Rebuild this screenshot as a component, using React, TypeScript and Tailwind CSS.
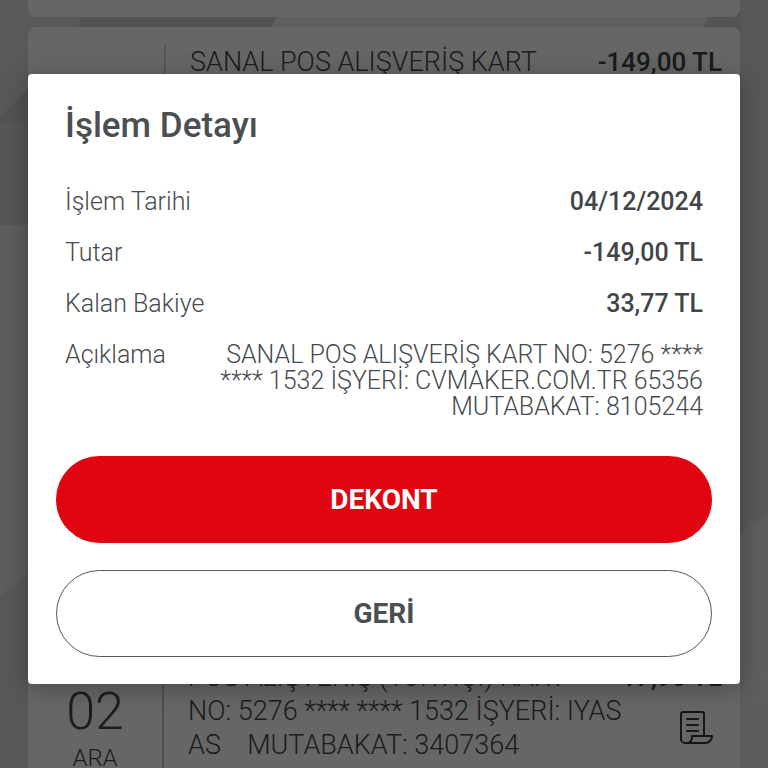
import type { ReactNode } from "react";

function Backdrop() {
  return (
    <svg
      className="absolute inset-0 h-full w-full"
      viewBox="0 0 768 768"
      preserveAspectRatio="none"
      aria-hidden="true"
    >
      <rect width="768" height="768" fill="#dcdfe1" />
      <polygon points="0,118 30,86 60,86 60,122 0,122" fill="#ced0d2" />
      <rect y="122" width="60" height="103" fill="#d4d7da" />
      <polygon points="0,225 60,225 60,550 0,596" fill="#e6e9e8" />
      <polygon points="0,596 60,550 60,768 0,768" fill="#dadde0" />
      <polygon points="700,0 768,0 768,150 700,200" fill="#d8dbde" />
      <polygon points="700,200 768,150 768,513 700,562" fill="#dddfe0" />
      <polygon points="700,562 768,513 768,704 700,704" fill="#e9ebea" />
      <rect x="700" y="704" width="68" height="64" fill="#e2e5ec" />
      <polygon points="84,10 280,10 268,34 76,34" fill="#cccecf" />
      <polygon points="280,10 712,10 700,34 268,34" fill="#ededed" />
      <polygon points="712,10 741,10 741,34 700,34" fill="#cfd1d2" />
    </svg>
  );
}

function ReceiptIcon() {
  return (
    <svg
      className="h-9 w-9"
      viewBox="0 0 36 36"
      fill="none"
      stroke="currentColor"
      strokeWidth="2"
      strokeLinecap="round"
      strokeLinejoin="round"
      aria-hidden="true"
    >
      <path d="M26 26V4a2 2 0 0 0-2-2H5a2 2 0 0 0-2 2v25a4 4 0 0 0 4 4h20c4 0 7-3 7-7H14c0 3-1 7-5 7" />
      <path d="M9 9h11M9 15h11M9 21h11" />
    </svg>
  );
}

function Amount({ children }: { children: ReactNode }) {
  return <span className="text-[26px] leading-[34px] font-medium text-[#3f4548]">{children}</span>;
}

function DetailRow({ label, children, strong }: { label: string; children: ReactNode; strong?: boolean }) {
  return (
    <div className="flex justify-between gap-10">
      <dt className="shrink-0">{label}</dt>
      <dd className={strong ? "text-right font-medium text-[#3f4548]" : "text-right"}>{children}</dd>
    </div>
  );
}

export default function App() {
  return (
    <div className="relative h-screen overflow-hidden font-['Roboto','Liberation_Sans',sans-serif] text-[#454b4f]">
      <Backdrop />
      <main className="relative flex h-full flex-col px-7">
        <div className="mb-[10px] h-[17px] shrink-0 rounded-b-lg bg-white" />
        <section className="flex flex-1 rounded-t-lg bg-white pt-[18px]">
          <div className="w-[138px] shrink-0 border-r-2 border-[#d4d6d8]" />
          <p className="min-w-0 flex-1 pl-6 text-[27px] leading-[34px] font-[350]">SANAL POS ALIŞVERİŞ KART</p>
          <div className="pr-[18px]">
            <Amount>-149,00 TL</Amount>
          </div>
        </section>
        <section className="flex h-[108px] shrink-0 bg-white">
          <div className="flex w-[136px] shrink-0 flex-col items-center gap-2 border-r-2 border-[#c4c8cc] pt-6">
            <span className="text-[52px] leading-[56px] font-[350]">02</span>
            <span className="text-2xl leading-5 font-[350]">ARA</span>
          </div>
          <p className="min-w-0 flex-1 pl-6 text-[27px] leading-[34px] font-[350] whitespace-pre">
            {"POS ALIŞVERİŞ (YURTİÇİ) KART\nNO: 5276 **** **** 1532 İŞYERİ: IYAS\nAS    MUTABAKAT: 3407364"}
          </p>
          <div className="flex flex-col items-end gap-4 pr-[18px]">
            <Amount>-17,90 TL</Amount>
            <button type="button" aria-label="Dekont" className="mr-2 text-[#33373a]">
              <ReceiptIcon />
            </button>
          </div>
        </section>
      </main>

      <div className="absolute inset-0 flex flex-col bg-black/60 px-7 pt-[74px]">
        <div
          role="dialog"
          aria-modal="true"
          aria-labelledby="dialog-title"
          className="rounded-[4px] bg-white px-7 pb-[27px] shadow-[0_4px_24px_rgba(0,0,0,0.3)]"
        >
          <div className="px-[9px] pt-[30px] pb-9">
            <h1 id="dialog-title" className="text-[35px] leading-[44px] font-medium text-[#4a4f52]">
              İşlem Detayı
            </h1>
            <dl className="mt-[41px] flex flex-col gap-[25px] text-[25px] leading-[26px] font-[350]">
              <DetailRow label="İşlem Tarihi" strong>04/12/2024</DetailRow>
              <DetailRow label="Tutar" strong>-149,00 TL</DetailRow>
              <DetailRow label="Kalan Bakiye" strong>33,77 TL</DetailRow>
              <DetailRow label="Açıklama">
                SANAL POS ALIŞVERİŞ KART NO: 5276 ****
                <br />
                **** 1532 İŞYERİ: CVMAKER.COM.TR 65356
                <br />
                MUTABAKAT: 8105244
              </DetailRow>
            </dl>
          </div>
          <div className="flex flex-col gap-[27px]">
            <button type="button" className="h-[87px] rounded-full bg-[#e10411] text-[28px] font-bold text-white">
              DEKONT
            </button>
            <button
              type="button"
              className="h-[87px] rounded-full border border-[#54595c] bg-white text-[28px] font-bold text-[#4a4f52]"
            >
              GERİ
            </button>
          </div>
        </div>
      </div>
    </div>
  );
}
